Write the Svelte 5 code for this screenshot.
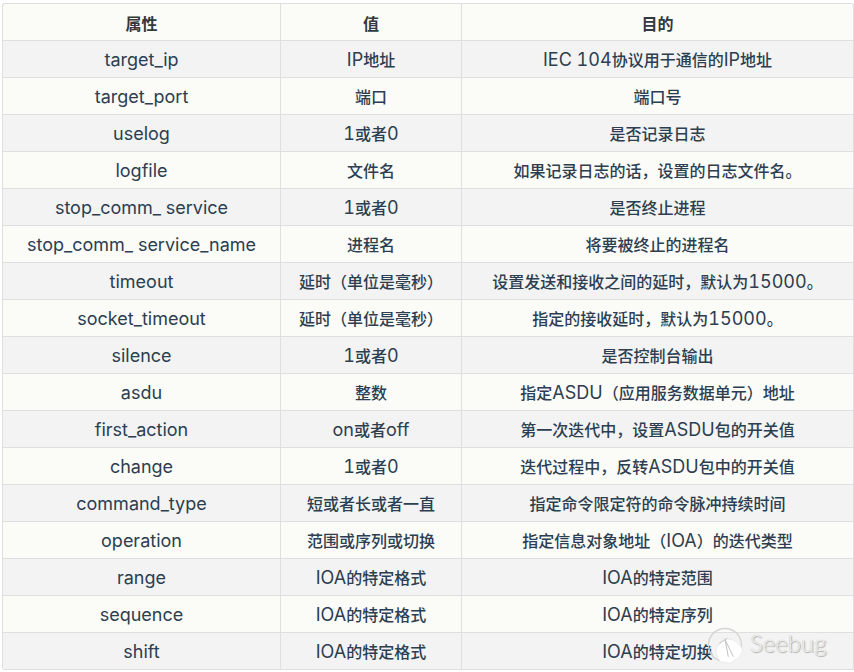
<script>
  // attribute table for the IEC 104 fuzzer config, plus the Seebug watermark
  const rows = [
    ['target_ip', 'IP地址', 'IEC 104协议用于通信的IP地址'],
    ['target_port', '端口', '端口号'],
    ['uselog', '1或者0', '是否记录日志'],
    ['logfile', '文件名', '如果记录日志的话，设置的日志文件名。'],
    ['stop_comm_ service', '1或者0', '是否终止进程'],
    ['stop_comm_ service_name', '进程名', '将要被终止的进程名'],
    ['timeout', '延时（单位是毫秒）', '设置发送和接收之间的延时，默认为15000。'],
    ['socket_timeout', '延时（单位是毫秒）', '指定的接收延时，默认为15000。'],
    ['silence', '1或者0', '是否控制台输出'],
    ['asdu', '整数', '指定ASDU（应用服务数据单元）地址'],
    ['first_action', 'on或者off', '第一次迭代中，设置ASDU包的开关值'],
    ['change', '1或者0', '迭代过程中，反转ASDU包中的开关值'],
    ['command_type', '短或者长或者一直', '指定命令限定符的命令脉冲持续时间'],
    ['operation', '范围或序列或切换', '指定信息对象地址（IOA）的迭代类型'],
    ['range', 'IOA的特定格式', 'IOA的特定范围'],
    ['sequence', 'IOA的特定格式', 'IOA的特定序列'],
    ['shift', 'IOA的特定格式', 'IOA的特定切换']
  ];

  // latin runs render larger than the CJK around them
  const runs = (s) => s.split(/([A-Za-z0-9 _]+)/).filter(Boolean);
  const isLatin = (s) => /^[A-Za-z0-9 _]/.test(s);
</script>

<div class="page">
  <table>
    <colgroup>
      <col class="c1" /><col class="c2" /><col class="c3" />
    </colgroup>
    <thead>
      <tr><th>属性</th><th>值</th><th>目的</th></tr>
    </thead>
    <tbody>
      {#each rows as r}
        <tr>
          <td class="attr">{r[0]}</td>
          {#each [r[1], r[2]] as text}
            <td>{#each runs(text) as run}{#if isLatin(run)}<span class="lat">{run}</span>{:else}{run}{/if}{/each}</td>
          {/each}
        </tr>
      {/each}
    </tbody>
  </table>

  <div class="mark">
    <svg width="36" height="40" viewBox="0 0 36 40">
      <circle cx="17" cy="19" r="16.5" fill="none" stroke="#d4d4d2" stroke-width="1.3" />
      <path d="M8.7 22 L16 12.3 L25 14 C30 17 33 20 34.7 24 L31.3 31.3 L22 37.3 L12 35.7 L8 27.3 Z" fill="#fff" stroke="#e4e4e2" stroke-width="0.6" />
      <path d="M11.3 17.3 L19.3 12.3 M17 13.5 L25.3 30.7 M17 13.5 L20.3 30.7" fill="none" stroke="#c2c2c0" stroke-width="1" />
    </svg>
    <span>Seebug</span>
  </div>
</div>

<style>
  :global(body) { background: #fff; }

  .page {
    position: relative; width: 854px; height: 672px;
    padding: 3px 0 0 2px; box-sizing: border-box; overflow: hidden;
  }

  table {
    width: 852px; table-layout: fixed; border-collapse: separate; border-spacing: 0;
    font-family: Inter, "Noto Sans CJK SC", sans-serif; font-size: 16px; font-weight: 500;
    color: #2c3e50; background: #fbfbf8; font-variant-numeric: tabular-nums;
    border-top: 1px solid #dfdfdd; border-left: 1px solid #dfdfdd; border-radius: 3px;
  }
  .c1 { width: 278px; }
  .c2 { width: 181px; }

  th, td {
    padding: 0; text-align: center; box-sizing: content-box; line-height: 24px;
    border-right: 1px solid #dfdfdd; border-bottom: 1px solid #dfdfdd;
  }
  td { height: 34px; padding-top: 2px; }
  th { height: 32px; padding-top: 4px; font-weight: 700; color: #34393f; }
  tbody tr:nth-child(odd) td { background: #f2f3f2; }
  .attr { font-size: 18px; font-weight: 400; }
  .lat { font-size: 18px; font-weight: 400; }

  .mark {
    position: absolute; left: 708px; top: 626px;
    display: flex; align-items: center; gap: 6px;
  }
  .mark span {
    font-family: Lato, sans-serif; font-size: 24px; font-weight: 300; margin-bottom: 6px;
    color: #f0f0ee; text-shadow: 0 0 1px #b4b4b2, 1px 1px 1px #aaaaa8; line-height: 1;
  }
</style>
